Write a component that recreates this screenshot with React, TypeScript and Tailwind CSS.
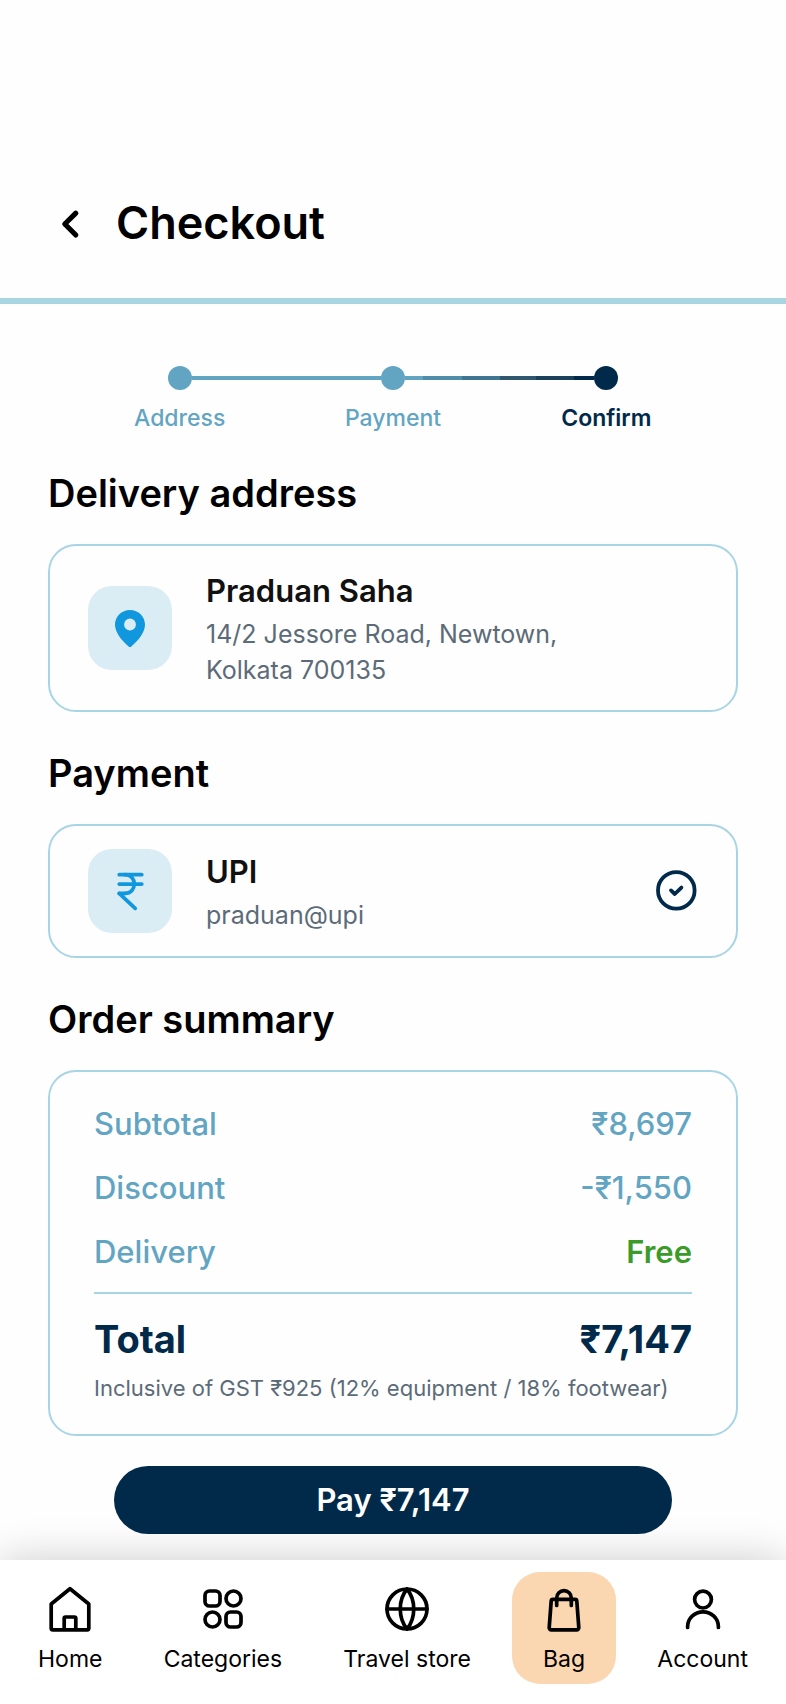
import React from 'react'
import { IndianRupee } from 'lucide-react'
import clsx from 'clsx'

interface Step {
  label: string
  active?: boolean
  before: string
  after: string
}

const STEPS: Step[] = [
  { label: 'Address', before: 'bg-transparent', after: 'bg-[#62a5c3]' },
  {
    label: 'Payment',
    before: 'bg-[#62a5c3]',
    after: 'bg-[linear-gradient(to_right,#62a5c3_19%,#4f8dab_19%_60%,#3f7591_60%)]',
  },
  {
    label: 'Confirm',
    active: true,
    before: 'bg-[linear-gradient(to_right,#315670_38%,#1c3f5c_38%_79%,#00294a_79%)]',
    after: 'bg-transparent',
  },
]

const SUMMARY = [
  { label: 'Subtotal', value: '₹8,697' },
  { label: 'Discount', value: '-₹1,550' },
  { label: 'Delivery', value: 'Free', free: true },
]

function NavIcon({ children }: { children: React.ReactNode }) {
  return (
    <svg
      viewBox="0 0 48 48"
      className="size-12"
      fill="none"
      stroke="currentColor"
      strokeWidth="3.7"
      strokeLinecap="round"
      strokeLinejoin="round"
      aria-hidden="true"
    >
      {children}
    </svg>
  )
}

const NAV_ITEMS = [
  {
    label: 'Home',
    icon: (
      <NavIcon>
        <path d="M24 4.7 42.8 20v24.3a1.5 1.5 0 0 1-1.5 1.5H6.7a1.5 1.5 0 0 1-1.5-1.5V20Z" />
        <path d="M18.2 45V34.2a1.2 1.2 0 0 1 1.2-1.2h9.2a1.2 1.2 0 0 1 1.2 1.2V45" />
      </NavIcon>
    ),
  },
  {
    label: 'Categories',
    icon: (
      <NavIcon>
        <rect x="6" y="7" width="15" height="15" rx="4.5" />
        <circle cx="34.5" cy="14.5" r="7.5" />
        <circle cx="13.5" cy="35.5" r="7.5" />
        <rect x="27" y="28" width="15" height="15" rx="4.5" />
      </NavIcon>
    ),
  },
  {
    label: 'Travel store',
    icon: (
      <NavIcon>
        <circle cx="24" cy="25" r="20" />
        <path d="M4 25h40M24 5c-9 11-9 29 0 40M24 5c9 11 9 29 0 40" />
      </NavIcon>
    ),
  },
  {
    label: 'Bag',
    active: true,
    icon: (
      <NavIcon>
        <path d="M13 15.3h22a1.8 1.8 0 0 1 1.8 1.7l2 26.6a2.1 2.1 0 0 1-2.1 2.2H11.3a2.1 2.1 0 0 1-2.1-2.2l2-26.6a1.8 1.8 0 0 1 1.8-1.7Z" />
        <path d="M16.7 21.5v-7.6a7.3 7.3 0 0 1 14.6 0v7.6" />
      </NavIcon>
    ),
  },
  {
    label: 'Account',
    icon: (
      <NavIcon>
        <circle cx="24" cy="15.6" r="8.4" />
        <path d="M8.6 43.4v-.6a15.4 15 0 0 1 30.8 0v.6" />
      </NavIcon>
    ),
  },
]

function Stepper() {
  return (
    <ol className="grid grid-cols-3 px-[73px]">
      {STEPS.map(({ label, active, before, after }) => (
        <li
          key={label}
          aria-current={active ? 'step' : undefined}
          className={clsx(
            'flex flex-col items-center gap-[14px] text-[23px] leading-7',
            active ? 'font-semibold text-[#00294a]' : 'font-medium text-[#62a5c3]'
          )}
        >
          <div className="flex w-full items-center">
            <span className={clsx('h-1 flex-1', before)} />
            <span className="size-6 rounded-full bg-current" />
            <span className={clsx('h-1 flex-1', after)} />
          </div>
          {label}
        </li>
      ))}
    </ol>
  )
}

function SectionTitle({ children }: { children: React.ReactNode }) {
  return <h2 className="mt-[34px] mb-6 text-[38px] leading-[54px] font-semibold text-black">{children}</h2>
}

interface InfoCardProps {
  icon: React.ReactNode
  title: string
  children: React.ReactNode
  trailing?: React.ReactNode
}

function InfoCard({ icon, title, children, trailing }: InfoCardProps) {
  return (
    <div className="flex min-h-[134px] items-center rounded-[28px] border-2 border-[#a8d5e5] px-[38px] py-[22px]">
      <div className="mr-[34px] flex size-[84px] shrink-0 items-center justify-center rounded-3xl bg-[#daecf4] text-[#1197dd]">
        {icon}
      </div>
      <div className="flex-1">
        <h3 className="mb-[2px] text-[31px] leading-[46px] font-semibold text-[#111111]">{title}</h3>
        <div className="text-[25px] leading-9 text-[#5c6b78]">{children}</div>
      </div>
      {trailing}
    </div>
  )
}

export default function App() {
  return (
    <div className="flex min-h-screen flex-col bg-[#fefefe] font-['Inter',sans-serif]">
      <header className="flex items-center border-b-6 border-[#a8d5e2] px-12 pt-[196px] pb-12">
        <button type="button" aria-label="Go back" className="mr-6 flex size-11 items-center justify-center text-black">
          <svg viewBox="0 0 44 44" className="size-11" fill="none" stroke="currentColor" strokeWidth="5.2" strokeLinecap="round" strokeLinejoin="round">
            <path d="M27.8 12.2 16.8 23 27.8 34" />
          </svg>
        </button>
        <h1 className="text-[45px] leading-[54px] font-semibold text-black">Checkout</h1>
      </header>

      <main className="flex-1 pt-[62px] pb-[26px]">
        <Stepper />

        <div className="px-12">
          <section>
            <SectionTitle>Delivery address</SectionTitle>
            <InfoCard
              title="Praduan Saha"
              icon={
                <svg viewBox="0 0 30 37" className="h-[37px] w-[30px]" fill="currentColor" aria-hidden="true">
                  <path
                    fillRule="evenodd"
                    d="M15 0C6.6 0 0 6.5 0 14.6 0 22.6 6.6 30.4 13.6 36.4a2.1 2.1 0 0 0 2.8 0C23.4 30.4 30 22.6 30 14.6 30 6.5 23.4 0 15 0Zm0 8.6a5.9 5.9 0 1 1 0 11.8 5.9 5.9 0 0 1 0-11.8Z"
                  />
                </svg>
              }
            >
              14/2 Jessore Road, Newtown,
              <br />
              Kolkata 700135
            </InfoCard>
          </section>

          <section>
            <SectionTitle>Payment</SectionTitle>
            <InfoCard
              title="UPI"
              icon={<IndianRupee size={45} />}
              trailing={
                <svg viewBox="0 0 42 42" className="size-[42px] text-[#00294a]" fill="none" stroke="currentColor" strokeWidth="3.8" strokeLinecap="round" strokeLinejoin="round" role="img" aria-label="Selected">
                  <circle cx="20.3" cy="20.4" r="18.3" />
                  <path d="m15 20.4 3.8 3.6 6.6-6.4" />
                </svg>
              }
            >
              praduan@upi
            </InfoCard>
          </section>

          <section>
            <SectionTitle>Order summary</SectionTitle>
            <div className="rounded-[28px] border-2 border-[#a8d5e5] px-11 py-[30px]">
              <dl className="text-[31px] leading-[44px] font-medium text-[#62a5c3]">
                {SUMMARY.map(({ label, value, free }) => (
                  <div key={label} className="flex justify-between not-first:mt-5">
                    <dt>{label}</dt>
                    <dd className={clsx(free && 'font-semibold text-[#3b9b28]')}>{value}</dd>
                  </div>
                ))}
                <div className="mt-[18px] flex justify-between border-t-2 border-[#a8d5e5] pt-[18px] text-[38px] leading-[54px] font-bold text-[#00294a]">
                  <dt>Total</dt>
                  <dd>₹7,147</dd>
                </div>
              </dl>
              <p className="mt-[6px] text-[22px] leading-8 text-[#5c6b78]">
                Inclusive of GST ₹925 (12% equipment / 18% footwear)
              </p>
            </div>
          </section>
        </div>

        <div className="relative z-10 mt-[30px] px-[114px]">
          <button type="button" className="h-[68px] w-full rounded-full bg-[#00294a] text-[31px] font-semibold text-white">
            Pay ₹7,147
          </button>
        </div>
      </main>

      <nav className="flex justify-between bg-white px-[18px] pt-3 pb-5 shadow-[0_0_40px_rgba(0,0,0,0.2)]">
        {NAV_ITEMS.map(({ label, icon, active }) => (
          <a
            key={label}
            href="#"
            aria-current={active ? 'page' : undefined}
            className={clsx(
              'flex min-w-[104px] flex-col items-center gap-[10px] rounded-[28px] px-5 pt-3 pb-2 text-[23px] leading-[34px] whitespace-nowrap text-black',
              active && 'bg-[#fad7b0]'
            )}
          >
            {icon}
            {label}
          </a>
        ))}
      </nav>
    </div>
  )
}
